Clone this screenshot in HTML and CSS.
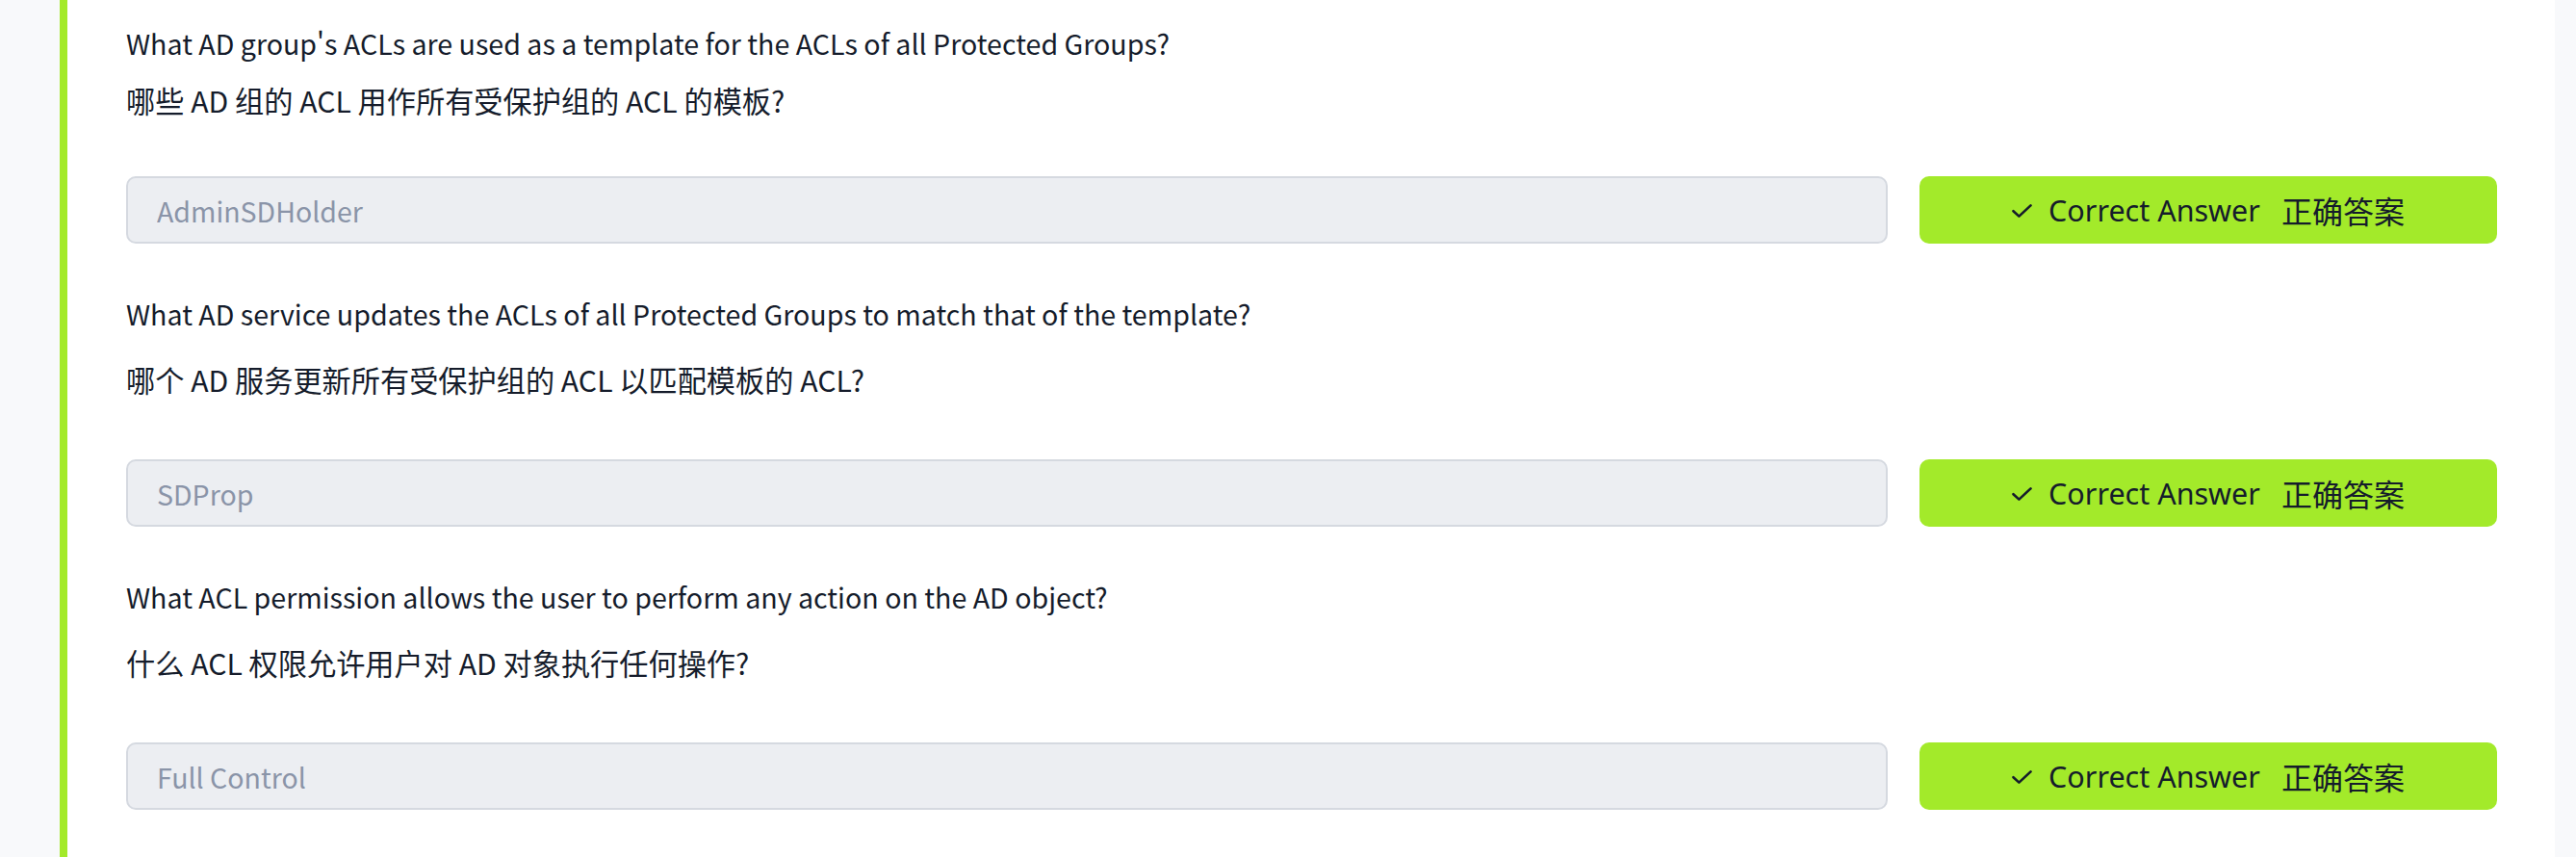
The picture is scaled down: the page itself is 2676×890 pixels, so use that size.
FILE: index.html
```html
<!DOCTYPE html>
<html lang="zh-CN">
<head>
<meta charset="utf-8">
<title>Questions</title>
<link rel="stylesheet" href="styles.css">
</head>
<body>
<div class="page">
  <div class="gutter"></div>
  <main class="panel">
    <section class="qa qa--first">
      <p class="q-en">What AD group's ACLs are used as a template for the ACLs of all Protected Groups?</p>
      <p class="q-zh">哪些 AD 组的 ACL 用作所有受保护组的 ACL 的模板?</p>
      <div class="answer-row">
        <input class="answer-input" type="text" value="AdminSDHolder" readonly>
        <button class="btn-correct" type="button">
          <svg class="check" viewBox="0 0 21 14" width="21" height="14"><path d="M1.5 7.2 L7.4 12.6 L19.5 1.4" fill="none" stroke="currentColor" stroke-width="2.6" stroke-linecap="round" stroke-linejoin="round"/></svg>
          <span class="btn-en">Correct Answer</span>
          <span class="btn-zh">正确答案</span>
        </button>
      </div>
    </section>
    <section class="qa">
      <p class="q-en">What AD service updates the ACLs of all Protected Groups to match that of the template?</p>
      <p class="q-zh">哪个 AD 服务更新所有受保护组的 ACL 以匹配模板的 ACL?</p>
      <div class="answer-row">
        <input class="answer-input" type="text" value="SDProp" readonly>
        <button class="btn-correct" type="button">
          <svg class="check" viewBox="0 0 21 14" width="21" height="14"><path d="M1.5 7.2 L7.4 12.6 L19.5 1.4" fill="none" stroke="currentColor" stroke-width="2.6" stroke-linecap="round" stroke-linejoin="round"/></svg>
          <span class="btn-en">Correct Answer</span>
          <span class="btn-zh">正确答案</span>
        </button>
      </div>
    </section>
    <section class="qa">
      <p class="q-en">What ACL permission allows the user to perform any action on the AD object?</p>
      <p class="q-zh">什么 ACL 权限允许用户对 AD 对象执行任何操作?</p>
      <div class="answer-row">
        <input class="answer-input" type="text" value="Full Control" readonly>
        <button class="btn-correct" type="button">
          <svg class="check" viewBox="0 0 21 14" width="21" height="14"><path d="M1.5 7.2 L7.4 12.6 L19.5 1.4" fill="none" stroke="currentColor" stroke-width="2.6" stroke-linecap="round" stroke-linejoin="round"/></svg>
          <span class="btn-en">Correct Answer</span>
          <span class="btn-zh">正确答案</span>
        </button>
      </div>
    </section>
  </main>
  <div class="gutter gutter--right"></div>
</div>
</body>
</html>
```

FILE: styles.css
```css
* { box-sizing: border-box; }

html, body {
  margin: 0;
  padding: 0;
  height: 100%;
  overflow: hidden;
}

body {
  background: #f8f9fb;
  font-family: "Noto Sans CJK SC", "Noto Sans", sans-serif;
  color: #151c2b;
}

.page {
  display: flex;
  min-height: 890px;
}

.gutter {
  width: 62px;
  flex: 0 0 62px;
  background: #f8f9fb;
}

.gutter--right {
  width: 22px;
  flex: 0 0 22px;
}

.panel {
  flex: 1;
  background: #ffffff;
  border-left: 8px solid #a3ea2a;
  padding: 24px 60px 0 61px;
}

.qa {
  margin-top: 52px;
}

.qa--first {
  margin-top: 0;
}

.q-en,
.q-zh {
  margin: 0;
  font-size: 28.6px;
  line-height: 42px;
  color: #151c2b;
}

.q-zh {
  margin-top: 26px;
  font-size: 30.2px;
}

.qa--first .q-zh {
  margin-top: 17px;
}

.answer-row {
  display: flex;
  gap: 33px;
  margin-top: 62px;
}

.qa--first .answer-row {
  margin-top: 58px;
}

.answer-input {
  flex: 1;
  min-width: 0;
  height: 70px;
  margin: 0;
  padding: 0 30px;
  border: 2px solid #d5d9e0;
  border-radius: 10px;
  background: #eceef2;
  font-family: "Noto Sans CJK SC", "Noto Sans", sans-serif;
  font-size: 28.5px;
  color: #8a94a8;
  outline: none;
}

.btn-correct {
  flex: 0 0 600px;
  height: 70px;
  margin: 0;
  padding: 0;
  border: none;
  border-radius: 10px;
  background: #a3ea2a;
  color: #151c2b;
  display: flex;
  align-items: center;
  justify-content: center;
  font-family: "Noto Sans", "Noto Sans CJK SC", sans-serif;
  font-size: 30.5px;
  cursor: pointer;
}

.check {
  flex: 0 0 auto;
  margin-right: 17px;
  margin-top: 2px;
}

.btn-zh {
  margin-left: 22px;
  font-family: "Noto Sans CJK SC", sans-serif;
  font-size: 32px;
}
```
